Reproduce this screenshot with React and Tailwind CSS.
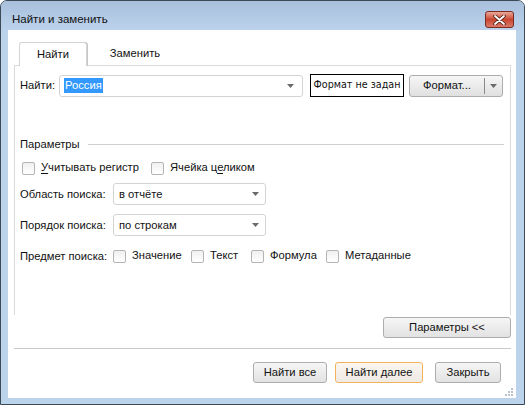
import React from "react";

const font = { fontFamily: '"Liberation Sans", Arial, sans-serif' };

function Arrow() {
  return (
    <svg width="7" height="4" viewBox="0 0 7 4">
      <path d="M0 0h7L3.5 4z" fill="#6a6a6a" />
    </svg>
  );
}

function Check({ children, className = "" }) {
  return (
    <div className={"flex items-center shrink-0 whitespace-nowrap " + className}>
      <span className="w-[13px] h-[13px] rounded-[2px] border border-[#b4b4b4] bg-gradient-to-b from-[#f0f0f0] to-white shrink-0" />
      <span className="ml-[6px] text-[11.2px] leading-none">{children}</span>
    </div>
  );
}

function Select({ value }) {
  return (
    <div className="w-[153px] h-[22px] border border-[#d3d3d3] rounded-[3px] flex items-center justify-between pl-[5px] pr-[6px] text-[11.2px] shrink-0">
      <span>{value}</span>
      <Arrow />
    </div>
  );
}

function Button({ children, className = "" }) {
  return (
    <div
      className={
        "h-[21px] border rounded-[3px] flex items-center justify-center text-[11.2px] whitespace-nowrap bg-gradient-to-b from-[#f6f6f6] to-[#e2e2e2] " +
        className
      }
    >
      {children}
    </div>
  );
}

export default function App() {
  return (
    <div
      className="w-[525px] h-[405px] bg-[#bcd3ec] border border-[#3c4a58] rounded-t-[7px] flex flex-col text-[#111] overflow-hidden"
      style={font}
    >
      {/* title bar */}
      <div className="h-[29px] shrink-0 flex items-center justify-between pl-[11px] pr-[10px] bg-gradient-to-b from-[#a8c0dc] to-[#bcd2ec]">
        <span className="text-[11.5px] mt-[8px]">Найти и заменить</span>
        <div className="w-[29px] h-[17px] mt-[8px] rounded-[3px] border border-[#7c2b22] bg-gradient-to-b from-[#e9a899] via-[#c8452f] to-[#d9796a] flex items-center justify-center">
          <svg width="13" height="10" viewBox="0 0 13 10">
            <path d="M2 1l9 8M11 1L2 9" stroke="#4a1a14" strokeWidth="3.4" strokeLinecap="round" />
            <path d="M2 1l9 8M11 1L2 9" stroke="#ffffff" strokeWidth="1.8" strokeLinecap="round" />
          </svg>
        </div>
      </div>

      {/* client area */}
      <div className="ml-[7px] w-[508px] h-[368px] bg-white relative flex flex-col">
        {/* tabs */}
        <div className="flex pl-[11px] pt-[12px] h-[36px] relative z-10">
          <div className="w-[68px] h-[24px] bg-white border border-[#d4d4d4] border-b-0 rounded-t-[3px] shadow-[1px_0_0_#c8c8c8] flex items-center justify-center text-[11.2px]">
            Найти
          </div>
          <div className="w-[96px] h-[23px] flex items-center justify-center text-[11.2px]">
            Заменить
          </div>
        </div>

        {/* tab panel */}
        <div className="ml-[6px] w-[497px] h-[250px] -mt-[1px] border border-b-0 border-[#d9d9d9] pl-[5px] pt-[8px] flex flex-col">
          <div className="flex items-center">
            <span className="w-[39px] text-[11.2px] whitespace-nowrap shrink-0">Найти:</span>
            <div className="w-[244px] h-[22px] border border-[#d3d3d3] rounded-[3px] flex items-center justify-between pl-[4px] pr-[8px] shrink-0">
              <span className="bg-[#3399ff] text-white text-[11.2px] leading-[15px] px-[1px]">Россия</span>
              <Arrow />
            </div>
            <div
              className="ml-[7px] w-[94px] h-[23px] border-[1.5px] border-black flex items-center justify-center text-[9.6px] whitespace-nowrap shrink-0"
              style={{ fontFamily: '"DejaVu Sans", sans-serif' }}
            >
              Формат не задан
            </div>
            <div className="ml-[5px] w-[94px] h-[22px] border border-[#adadad] rounded-[3px] bg-gradient-to-b from-[#f6f6f6] to-[#e0e0e0] flex items-center text-[11.2px] shrink-0">
              <span className="w-[74px] text-center">Формат...</span>
              <span className="w-px h-[16px] bg-[#8a8a8a]" />
              <span className="flex-1 flex justify-center">
                <Arrow />
              </span>
            </div>
          </div>

          <div className="mt-[39px] h-[16px] flex items-center">
            <span className="text-[11.2px] whitespace-nowrap">Параметры</span>
            <span className="ml-[8px] w-[416px] h-px bg-[#cfcfcf]" />
          </div>

          <div className="mt-[8px] h-[16px] flex items-center pl-[2px]">
            <Check className="w-[129px]">
              <span className="underline underline-offset-2">У</span>читывать регистр
            </Check>
            <Check>
              Ячейка ц<span className="underline underline-offset-2">е</span>ликом
            </Check>
          </div>

          <div className="mt-[7px] flex items-center">
            <span className="w-[93px] text-[11.2px] whitespace-nowrap shrink-0">Область поиска:</span>
            <Select value="в отчёте" />
          </div>

          <div className="mt-[9px] flex items-center">
            <span className="w-[93px] text-[11.2px] whitespace-nowrap shrink-0">Порядок поиска:</span>
            <Select value="по строкам" />
          </div>

          <div className="mt-[12px] h-[16px] flex items-center">
            <span className="w-[93px] text-[11.2px] whitespace-nowrap shrink-0">Предмет поиска:</span>
            <Check className="w-[78px]">Значение</Check>
            <Check className="w-[60px]">Текст</Check>
            <Check className="w-[75px]">Формула</Check>
            <Check>Метаданные</Check>
          </div>
        </div>

        <div className="flex justify-end pr-[5px] mt-[2px]">
          <Button className="w-[128px] border-[#adadad]">Параметры &lt;&lt;</Button>
        </div>

        <div className="ml-[6px] w-[497px] h-px bg-[#c9c9c9] mt-[10px]" />

        <div className="flex justify-end pr-[15px] mt-[13px]">
          <Button className="w-[74px] border-[#adadad]">Найти все</Button>
          <Button className="ml-[8px] w-[88px] border-[#f2b35c] from-[#fbf6ee] to-[#eeeae4]">
            Найти далее
          </Button>
          <Button className="ml-[12px] w-[66px] border-[#adadad]">Закрыть</Button>
        </div>

        {/* resize grip */}
        <svg className="absolute right-[3px] bottom-[2px]" width="9" height="9" viewBox="0 0 9 9">
          {[
            [7, 1],
            [4, 4],
            [7, 4],
            [1, 7],
            [4, 7],
            [7, 7],
          ].map(([x, y], i) => (
            <rect key={i} x={x} y={y} width="2" height="2" fill="#b8c2cc" />
          ))}
        </svg>
      </div>
    </div>
  );
}
